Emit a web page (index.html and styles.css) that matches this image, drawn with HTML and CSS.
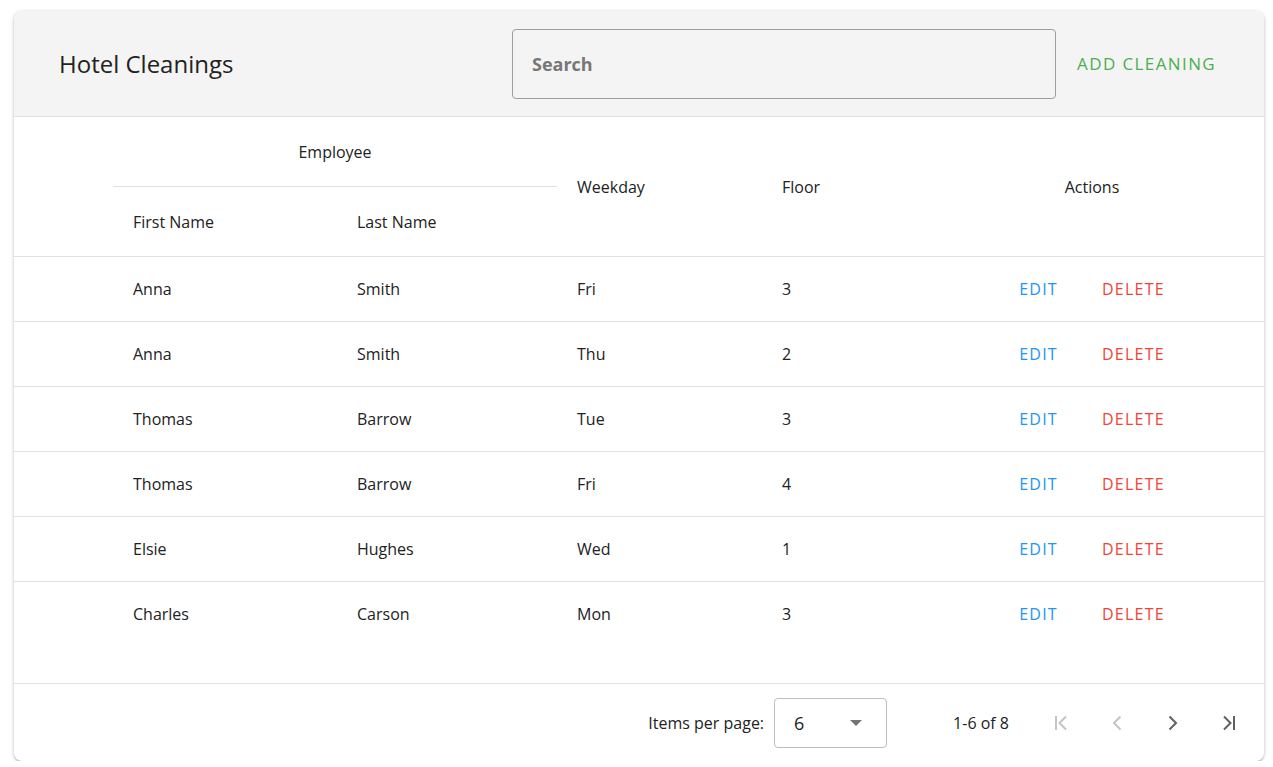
FILE: index.html
```html
<!DOCTYPE html>
<html lang="en">
<head>
<meta charset="utf-8">
<title>Hotel Cleanings</title>
<link rel="stylesheet" href="styles.css">
</head>
<body>
<div class="card">
  <div class="toolbar">
    <h1 class="title">Hotel Cleanings</h1>
    <div class="search"><input class="search-input" type="text" placeholder="Search"></div>
    <button class="btn btn-green">ADD CLEANING</button>
  </div>
  <div class="table-wrap">
    <table class="table">
      <colgroup>
        <col class="c-spacer"><col class="c-first"><col class="c-last"><col class="c-day"><col class="c-floor"><col class="c-actions">
      </colgroup>
      <thead>
        <tr class="hrow1">
          <th rowspan="2" class="spacer"></th>
          <th colspan="2" class="group">Employee</th>
          <th rowspan="2">Weekday</th>
          <th rowspan="2">Floor</th>
          <th rowspan="2" class="center">Actions</th>
        </tr>
        <tr class="hrow2">
          <th>First Name</th>
          <th>Last Name</th>
        </tr>
      </thead>
      <tbody>
        <tr><td></td><td>Anna</td><td>Smith</td><td>Fri</td><td>3</td><td class="actions"><button class="btn btn-blue">EDIT</button><button class="btn btn-red">DELETE</button></td></tr>
        <tr><td></td><td>Anna</td><td>Smith</td><td>Thu</td><td>2</td><td class="actions"><button class="btn btn-blue">EDIT</button><button class="btn btn-red">DELETE</button></td></tr>
        <tr><td></td><td>Thomas</td><td>Barrow</td><td>Tue</td><td>3</td><td class="actions"><button class="btn btn-blue">EDIT</button><button class="btn btn-red">DELETE</button></td></tr>
        <tr><td></td><td>Thomas</td><td>Barrow</td><td>Fri</td><td>4</td><td class="actions"><button class="btn btn-blue">EDIT</button><button class="btn btn-red">DELETE</button></td></tr>
        <tr><td></td><td>Elsie</td><td>Hughes</td><td>Wed</td><td>1</td><td class="actions"><button class="btn btn-blue">EDIT</button><button class="btn btn-red">DELETE</button></td></tr>
        <tr><td></td><td>Charles</td><td>Carson</td><td>Mon</td><td>3</td><td class="actions"><button class="btn btn-blue">EDIT</button><button class="btn btn-red">DELETE</button></td></tr>
      </tbody>
    </table>
  </div>
  <div class="paginator">
    <span class="ipp-label">Items per page:</span>
    <div class="select">
      <span class="select-value">6</span>
      <svg class="select-arrow" width="12" height="6" viewBox="0 0 12 6"><path d="M0 0h12L6 6z" fill="#757575"/></svg>
    </div>
    <span class="range">1-6 of 8</span>
    <div class="nav">
      <button class="icon-btn disabled" aria-label="First page"><svg width="24" height="24" viewBox="0 0 24 24"><path d="M7 5v14" /><polyline points="17,5.5 10.5,12 17,18.5"/></svg></button>
      <button class="icon-btn disabled" aria-label="Previous page"><svg width="24" height="24" viewBox="0 0 24 24"><polyline points="15.5,5.5 9,12 15.5,18.5"/></svg></button>
      <button class="icon-btn" aria-label="Next page"><svg width="24" height="24" viewBox="0 0 24 24"><polyline points="8.5,5.5 15,12 8.5,18.5"/></svg></button>
      <button class="icon-btn" aria-label="Last page"><svg width="24" height="24" viewBox="0 0 24 24"><polyline points="7,5.5 13.5,12 7,18.5"/><path d="M17 5v14" /></svg></button>
    </div>
  </div>
</div>
</body>
</html>
```

FILE: styles.css
```css
* { box-sizing: border-box; }

body {
  margin: 0;
  background: #ffffff;
  font-family: "Open Sans", "Noto Sans", "Liberation Sans", sans-serif;
  color: #212121;
}

.card {
  margin: 11px 9px 0 14px;
  width: 1250px;
  height: 750px;
  background: #fff;
  border-radius: 8px;
  box-shadow: 0 2px 2px -1px rgba(0,0,0,.2), 0 1px 3px 0 rgba(0,0,0,.14), 0 1px 5px 0 rgba(0,0,0,.12);
  overflow: hidden;
  display: flex;
  flex-direction: column;
}

.toolbar {
  height: 106px;
  flex: none;
  background: #f4f4f4;
  border-bottom: 1px solid #e0e0e0;
  display: flex;
  align-items: center;
  padding: 0 31px 0 45px;
}

.title {
  margin: 0;
  font-size: 24px;
  font-weight: 400;
  color: #222;
  width: 453px;
  flex: none;
}

.search {
  width: 544px;
  height: 70px;
  border: 1px solid #9e9e9e;
  border-radius: 4px;
  display: flex;
  align-items: center;
  padding: 0 17px;
}

.search-input {
  border: none;
  background: transparent;
  outline: none;
  width: 100%;
  font-family: inherit;
  font-size: 18px;
  font-weight: 700;
  color: #333;
}
.search-input::placeholder { color: #777; opacity: 1; }

.btn {
  background: transparent;
  border: none;
  font-family: inherit;
  font-size: 16px;
  letter-spacing: 1.25px;
  padding: 0 16px;
  height: 36px;
  min-width: 64px;
  cursor: pointer;
}
.btn-green { color: #4caf50; margin-left: 5px; font-size: 17px; letter-spacing: 1.4px; }
.btn-blue { color: #2196f3; }
.btn-red { color: #f44336; }

.table-wrap {
  flex: 1;
}

.table {
  width: 100%;
  border-collapse: collapse;
  table-layout: fixed;
  font-size: 16px;
}

.c-spacer { width: 99px; }
.c-first { width: 224px; }
.c-last { width: 220px; }
.c-day { width: 205px; }
.c-floor { width: 158px; }
.c-actions { width: 344px; }

th {
  font-weight: 400;
  text-align: left;
  padding: 2px 20px 0;
  color: #222;
}
th.group { text-align: center; border-bottom: 1px solid #e0e0e0; }
th.center { text-align: center; }
.hrow1 { height: 69px; }
.hrow2 { height: 70px; }
thead { border-bottom: 1px solid #e0e0e0; }

td {
  padding: 1px 20px 0;
  height: 65px;
  color: #222;
}
tbody tr { border-bottom: 1px solid #e0e0e0; }
tbody tr:last-child { border-bottom: none; }

td.actions {
  text-align: center;
  padding: 0;
}
.actions .btn { margin: 0 6px; }

.paginator {
  height: 78px;
  flex: none;
  border-top: 1px solid #e0e0e0;
  display: flex;
  align-items: center;
  justify-content: flex-end;
  padding-right: 15px;
  font-size: 16px;
  color: #222;
}

.ipp-label { margin-right: 10px; }

.select {
  width: 113px;
  height: 50px;
  border: 1px solid #bdbdbd;
  border-radius: 4px;
  display: flex;
  align-items: center;
  justify-content: space-between;
  padding: 0 24px 0 19px;
  font-size: 18px;
  margin-right: 66px;
}

.range { margin-right: 32px; }

.nav { display: flex; gap: 16px; }

.icon-btn {
  width: 40px;
  height: 40px;
  border: none;
  background: transparent;
  padding: 0;
  display: flex;
  align-items: center;
  justify-content: center;
  cursor: pointer;
}
.icon-btn svg { fill: none; stroke: #616161; stroke-width: 2; }
.icon-btn.disabled svg { stroke: #c4c4c4; }
```
